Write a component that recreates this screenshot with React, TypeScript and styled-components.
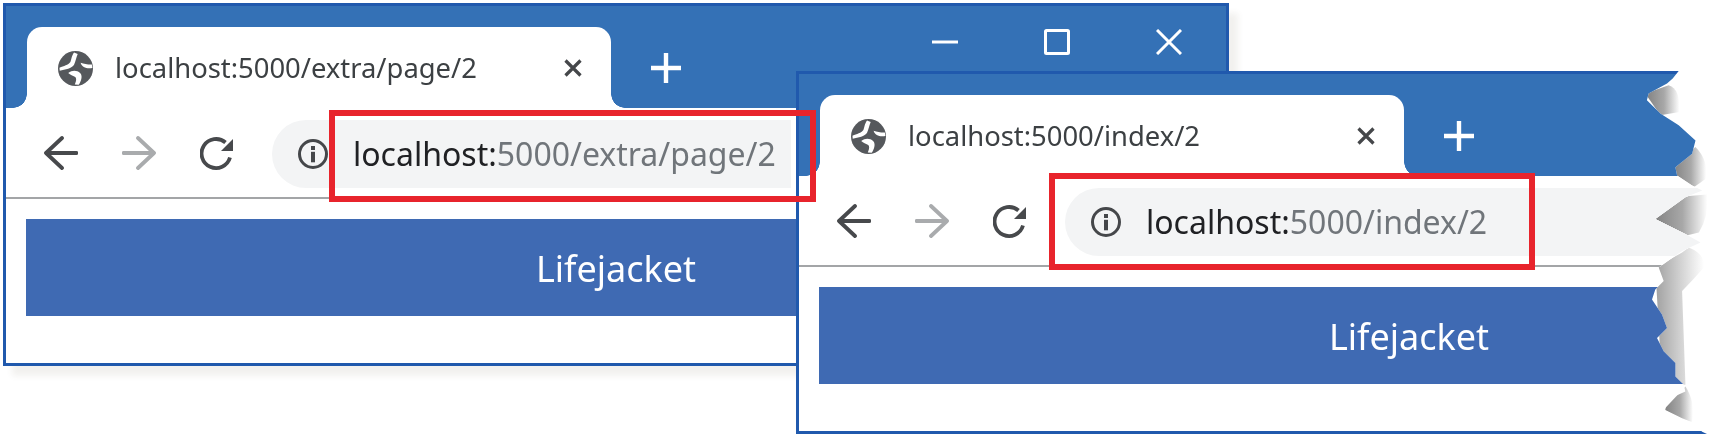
import React from "react";
import styled, { createGlobalStyle } from "styled-components";

const tornEdge: [number, number][] = [
  [1430, 63], [1412, 85], [1395, 100], [1340, 130], [1335, 150], [1375, 190], [1430, 225], [1480, 270],
  [1470, 310], [1420, 350], [1425, 375], [1470, 405], [1500, 420], [1450, 440], [1360, 505], [1450, 550],
  [1495, 575], [1440, 600], [1370, 650], [1385, 690], [1360, 715], [1350, 745], [1380, 790], [1395, 830],
  [1365, 860], [1385, 900], [1420, 935], [1420, 975], [1445, 1000], [1450, 1020], [1395, 1045], [1390, 1075],
  [1440, 1100], [1465, 1110], [1500, 1140], [1535, 1157],
];

const tornClip = [
  "0 0",
  ...tornEdge.map(([x, y]) => `${(1200 + x / 2.987 - 796).toFixed(1)}px ${(50 + y / 2.987 - 71).toFixed(1)}px`),
  "0 100%",
].join(", ");

const Global = createGlobalStyle`
  html, body { margin: 0; padding: 0; background: #fff; overflow: hidden; }
`;

const Stage = styled.div`
  position: relative;
  width: 1725px;
  height: 441px;
  overflow: hidden;
  background: #fff;
  font-family: "Noto Sans", "Open Sans", sans-serif;
  filter: blur(0.35px);
`;

const Win = styled.div<{ $x: number; $y: number; $torn?: boolean }>`
  position: absolute;
  left: ${(p) => p.$x}px;
  top: ${(p) => p.$y}px;
  width: 1226px;
  height: 363px;
  box-sizing: border-box;
  border: 3px solid #2059ad;
  background: #fff;
  display: flex;
  flex-direction: column;
  box-shadow: ${(p) => (p.$torn ? "none" : "9px 10px 6px rgba(90, 80, 50, 0.08)")};
  clip-path: ${(p) => (p.$torn ? `polygon(${tornClip})` : "none")};
`;

const Strip = styled.div`
  height: 102px;
  flex: none;
  background: #3471b6;
  display: flex;
  align-items: flex-end;
  padding-left: 21px;
  position: relative;
`;

const Tab = styled.div`
  width: 584px;
  height: 81px;
  background: #fff;
  border-radius: 15px 15px 0 0;
  display: flex;
  align-items: center;
  padding: 0 28px 0 31px;
  box-sizing: border-box;
  position: relative;
  &::before,
  &::after {
    content: "";
    position: absolute;
    bottom: 0;
    width: 14px;
    height: 14px;
  }
  &::before {
    left: -14px;
    background: radial-gradient(circle at 0 0, transparent 13.5px, #fff 14px);
  }
  &::after {
    right: -14px;
    background: radial-gradient(circle at 100% 0, transparent 13.5px, #fff 14px);
  }
`;

const TabTitle = styled.span`
  margin-left: 22px;
  flex: 1;
  font-size: 27.4px;
  color: #3c4043;
  white-space: nowrap;
`;

const NewTab = styled.svg`
  width: 30px;
  height: 30px;
  margin: 0 0 25px 40px;
  flex: none;
`;

const Controls = styled.div`
  position: absolute;
  right: 44px;
  top: 23px;
  display: flex;
  gap: 86px;
`;

const ControlIcon = styled.svg`
  width: 26px;
  height: 26px;
  display: block;
`;

const Toolbar = styled.div`
  height: 89px;
  flex: none;
  display: flex;
  align-items: center;
  padding-left: 38px;
  border-bottom: 2px solid #a3a5a7;
  box-sizing: content-box;
  background: #fff;
`;

const NavGroup = styled.div`
  display: flex;
  gap: 44px;
  margin-right: 38px;
`;

const NavIcon = styled.svg`
  width: 34px;
  height: 34px;
  display: block;
`;

const Omnibox = styled.div<{ $width?: number }>`
  height: 68px;
  margin-top: 2px;
  width: ${(p) => (p.$width ? `${p.$width}px` : "auto")};
  flex: ${(p) => (p.$width ? "none" : "1")};
  background: #f3f4f5;
  border-radius: 34px 0 0 34px;
  display: flex;
  align-items: center;
  padding-left: 26px;
  box-sizing: border-box;
`;

const Url = styled.span`
  margin-left: 25px;
  font-size: 32px;
  white-space: nowrap;
  color: #70757a;
`;

const Host = styled.span`
  color: #202124;
`;

const Body = styled.div`
  flex: 1;
  padding: 20px 20px 0;
`;

const Band = styled.div`
  height: 97px;
  padding-top: 2px;
  box-sizing: border-box;
  background: #3f6ab3;
  color: #fff;
  font-size: 36px;
  display: flex;
  align-items: center;
  justify-content: center;
`;

const Highlight = styled.div<{ $x: number; $y: number; $w: number; $h: number }>`
  position: absolute;
  left: ${(p) => p.$x}px;
  top: ${(p) => p.$y}px;
  width: ${(p) => p.$w}px;
  height: ${(p) => p.$h}px;
  box-sizing: border-box;
  border: 6px solid #e8242c;
`;

const TearShadow = styled.svg`
  position: absolute;
  left: 1200px;
  top: 50px;
  width: 525px;
  height: 391px;
`;

const GlobeIcon = styled.svg`
  width: 35px;
  height: 35px;
  flex: none;
  margin-top: 2px;
`;

const Globe = () => (
  <GlobeIcon viewBox="0 0 24 24">
    <circle cx="12" cy="12" r="12" fill="#55585c" />
    <path
      d="M1 11.5 C4 10 7 9.8 8.5 7.5 C9.2 6 9.2 3.5 11 1 L13.5 2 C12.5 4.5 12 7 11 9.5 C9.5 12 5 12.8 1.2 13.6Z"
      fill="#fff"
    />
    <path
      d="M7 15 C10 13 13 13.2 15.3 15.2 C17 17 16 20.5 14.2 23.2 L11.5 23 C12.5 20.5 13 18.6 11.5 17.6 C10.2 16.6 8.5 16.5 7 15Z"
      fill="#fff"
    />
    <path d="M15.5 8 C18 8.8 20.5 9.3 23.2 9.2 L23.6 11.6 C20 12.2 16.5 11.5 15.5 8Z" fill="#fff" />
  </GlobeIcon>
);

const CloseIcon = styled.svg`
  width: 20px;
  height: 20px;
  flex: none;
`;

const CloseGlyph = () => (
  <CloseIcon viewBox="0 0 20 20">
    <path d="M2.5 2.5 L17.5 17.5 M17.5 2.5 L2.5 17.5" stroke="#45474a" strokeWidth="3.2" fill="none" />
  </CloseIcon>
);

const Arrow = ({ flip, color }: { flip?: boolean; color: string }) => (
  <NavIcon viewBox="0 0 34 34">
    <path
      d={flip ? "M1.5 17 H31.5 M16 2 L32 17 L16 32" : "M32.5 17 H2.5 M18 2 L2 17 L18 32"}
      stroke={color}
      strokeWidth="3.8"
      strokeLinecap="round"
      strokeLinejoin="round"
      fill="none"
    />
  </NavIcon>
);

const Reload = () => (
  <NavIcon viewBox="0 0 34 34">
    <path d="M30 21.5 A14.5 14.5 0 1 1 25.5 6.5" stroke="#47494c" strokeWidth="3.8" fill="none" />
    <path d="M33 3 V15 H21 Z" fill="#47494c" />
  </NavIcon>
);

const InfoIcon = styled.svg`
  width: 30px;
  height: 30px;
  flex: none;
`;

const Info = () => (
  <InfoIcon viewBox="0 0 30 30">
    <circle cx="15" cy="15" r="13.5" stroke="#45474a" strokeWidth="3" fill="none" />
    <rect x="13" y="7" width="4" height="4" fill="#45474a" />
    <rect x="13" y="12.8" width="4" height="10.5" fill="#45474a" />
  </InfoIcon>
);

type BrowserProps = {
  x: number;
  y: number;
  path: string;
  torn?: boolean;
  omniWidth?: number;
  controls?: boolean;
};

const Browser = ({ x, y, path, torn, omniWidth, controls }: BrowserProps) => (
  <Win $x={x} $y={y} $torn={torn}>
    <Strip>
      <Tab>
        <Globe />
        <TabTitle>localhost:5000/{path}</TabTitle>
        <CloseGlyph />
      </Tab>
      <NewTab viewBox="0 0 30 30">
        <path d="M15 0 V30 M0 15 H30" stroke="#fff" strokeWidth="4.4" fill="none" />
      </NewTab>
      {controls && (
        <Controls>
          <ControlIcon viewBox="0 0 26 26">
            <path d="M0 13 H26" stroke="#fff" strokeWidth="3" fill="none" />
          </ControlIcon>
          <ControlIcon viewBox="0 0 26 26">
            <rect x="1.5" y="1.5" width="23" height="23" rx="1" stroke="#fff" strokeWidth="3" fill="none" />
          </ControlIcon>
          <ControlIcon viewBox="0 0 26 26">
            <path d="M1 1 L25 25 M25 1 L1 25" stroke="#fff" strokeWidth="3" fill="none" />
          </ControlIcon>
        </Controls>
      )}
    </Strip>
    <Toolbar>
      <NavGroup>
        <Arrow color="#47494c" />
        <Arrow flip color="#a9abad" />
        <Reload />
      </NavGroup>
      <Omnibox $width={omniWidth}>
        <Info />
        <Url>
          <Host>localhost:</Host>5000/{path}
        </Url>
      </Omnibox>
    </Toolbar>
    <Body>
      <Band>Lifejacket</Band>
    </Body>
  </Win>
);

export default function App() {
  return (
    <Stage>
      <Global />
      <Browser x={3} y={3} path="extra/page/2" omniWidth={519} controls />
      <TearShadow viewBox="0 0 1568 1168">
        <defs>
          <linearGradient id="tearFade" x1="0" x2="1" y1="0" y2="0">
            <stop offset="0" stopColor="#7f7f7f" />
            <stop offset="0.55" stopColor="#a8a8a8" />
            <stop offset="1" stopColor="#ffffff" />
          </linearGradient>
          <linearGradient id="tearFadeLight" x1="0" x2="1" y1="0" y2="0">
            <stop offset="0" stopColor="#a0a0a0" />
            <stop offset="0.5" stopColor="#d0d0d0" />
            <stop offset="1" stopColor="#ffffff" />
          </linearGradient>
        </defs>
        <path d="M1330 130 L1400 105 Q1435 115 1432 185 L1375 195Z" fill="url(#tearFade)" />
        <path d="M1410 350 L1480 290 Q1520 330 1510 385 L1475 410 L1420 380Z" fill="url(#tearFade)" />
        <path d="M1350 505 L1450 437 L1515 432 Q1520 500 1490 545 L1450 555Z" fill="url(#tearFade)" />
        <path d="M1360 650 L1440 605 L1460 590 Q1510 610 1505 650 Q1470 690 1440 720 L1450 1000 L1380 1000Z" fill="url(#tearFadeLight)" />
        <path d="M1385 1075 L1450 1005 Q1480 1050 1470 1110 L1460 1112Z" fill="url(#tearFade)" />
      </TearShadow>
      <Browser x={796} y={71} path="index/2" torn />
      <Highlight $x={329} $y={110} $w={487} $h={92} />
      <Highlight $x={1049} $y={173} $w={486} $h={97} />
    </Stage>
  );
}
